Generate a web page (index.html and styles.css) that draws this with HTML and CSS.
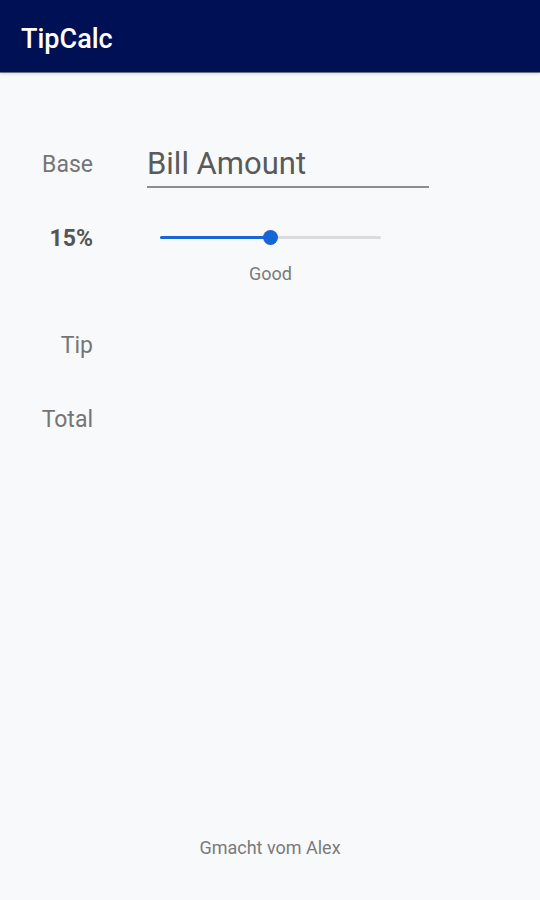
FILE: index.html
```html
<!DOCTYPE html>
<html lang="de">
<head>
    <meta charset="UTF-8">
    <meta name="viewport" content="width=device-width, initial-scale=1.0">
    <title>TipCalc</title>
    <link rel="stylesheet" href="styles.css">
</head>
<body>
    <header class="app-bar">
        <h1>TipCalc</h1>
    </header>

    <main class="calc">
        <div class="row row-base">
            <span class="label">Base</span>
            <div class="field">
                <input type="text" placeholder="Bill Amount">
            </div>
        </div>

        <div class="row row-percent">
            <span class="label label-bold">15%</span>
            <div class="slider-wrap">
                <div class="slider">
                    <div class="slider-fill" style="width: 50%"></div>
                    <div class="slider-thumb" style="left: 50%"></div>
                </div>
                <div class="slider-caption">Good</div>
            </div>
        </div>

        <div class="row row-tip">
            <span class="label">Tip</span>
            <span class="value" id="tip"></span>
        </div>

        <div class="row row-total">
            <span class="label">Total</span>
            <span class="value" id="total"></span>
        </div>
    </main>

    <footer class="credit">Gmacht vom Alex</footer>
</body>
</html>
```

FILE: styles.css
```css
:root {
    --primary: #001055;
    --accent: #1766d6;
    --bg: #f8f9fb;
    --text: #757575;
    --text-dark: #555;
    --track: #dcdcdc;
}

* {
    box-sizing: border-box;
}

body {
    margin: 0;
    height: 100vh;
    display: flex;
    flex-direction: column;
    background: var(--bg);
    font-family: 'Roboto', 'Noto Sans', sans-serif;
    color: var(--text);
}

.app-bar {
    height: 73px;
    background: var(--primary);
    padding: 6px 21px 0;
    display: flex;
    align-items: center;
    border-bottom: 1px solid #6c6f80;
    box-shadow: 0 1px 3px rgba(0,0,0,0.15);
}

.app-bar h1 {
    margin: 0;
    color: #fff;
    font-size: 27px;
    font-weight: 500;
}

.calc {
    padding-top: 67px;
}

.row {
    display: flex;
    align-items: center;
}

.label {
    width: 93px;
    text-align: right;
    font-size: 23px;
    flex-shrink: 0;
}

.label-bold {
    font-weight: 700;
    color: var(--text-dark);
    font-size: 23px;
}

.field {
    margin-left: 54px;
    width: 282px;
}

.field input {
    width: 100%;
    height: 48px;
    border: none;
    border-bottom: 2px solid #8d8d8d;
    background: transparent;
    font-family: inherit;
    font-size: 31px;
    color: var(--text-dark);
    padding: 0;
    outline: none;
}

.field input::placeholder {
    color: #5a5a5a;
}

.row-percent {
    margin-top: 48px;
    align-items: flex-start;
}

.row-percent .label {
    margin-top: -11px;
}

.slider-wrap {
    margin-left: 67px;
    width: 221px;
}

.slider {
    position: relative;
    height: 3px;
    background: var(--track);
    border-radius: 2px;
}

.slider-fill {
    height: 100%;
    background: var(--accent);
    border-radius: 2px;
}

.slider-thumb {
    position: absolute;
    top: 50%;
    width: 15px;
    height: 15px;
    margin: -7.5px 0 0 -7.5px;
    border-radius: 50%;
    background: var(--accent);
}

.slider-caption {
    margin-top: 24px;
    text-align: center;
    font-size: 18px;
    color: #7a7a7a;
}

.row-tip {
    margin-top: 48px;
}

.row-total {
    margin-top: 47px;
}

.credit {
    margin-top: auto;
    padding-bottom: 42px;
    text-align: center;
    font-size: 18px;
    color: #7a7a7a;
}
```
